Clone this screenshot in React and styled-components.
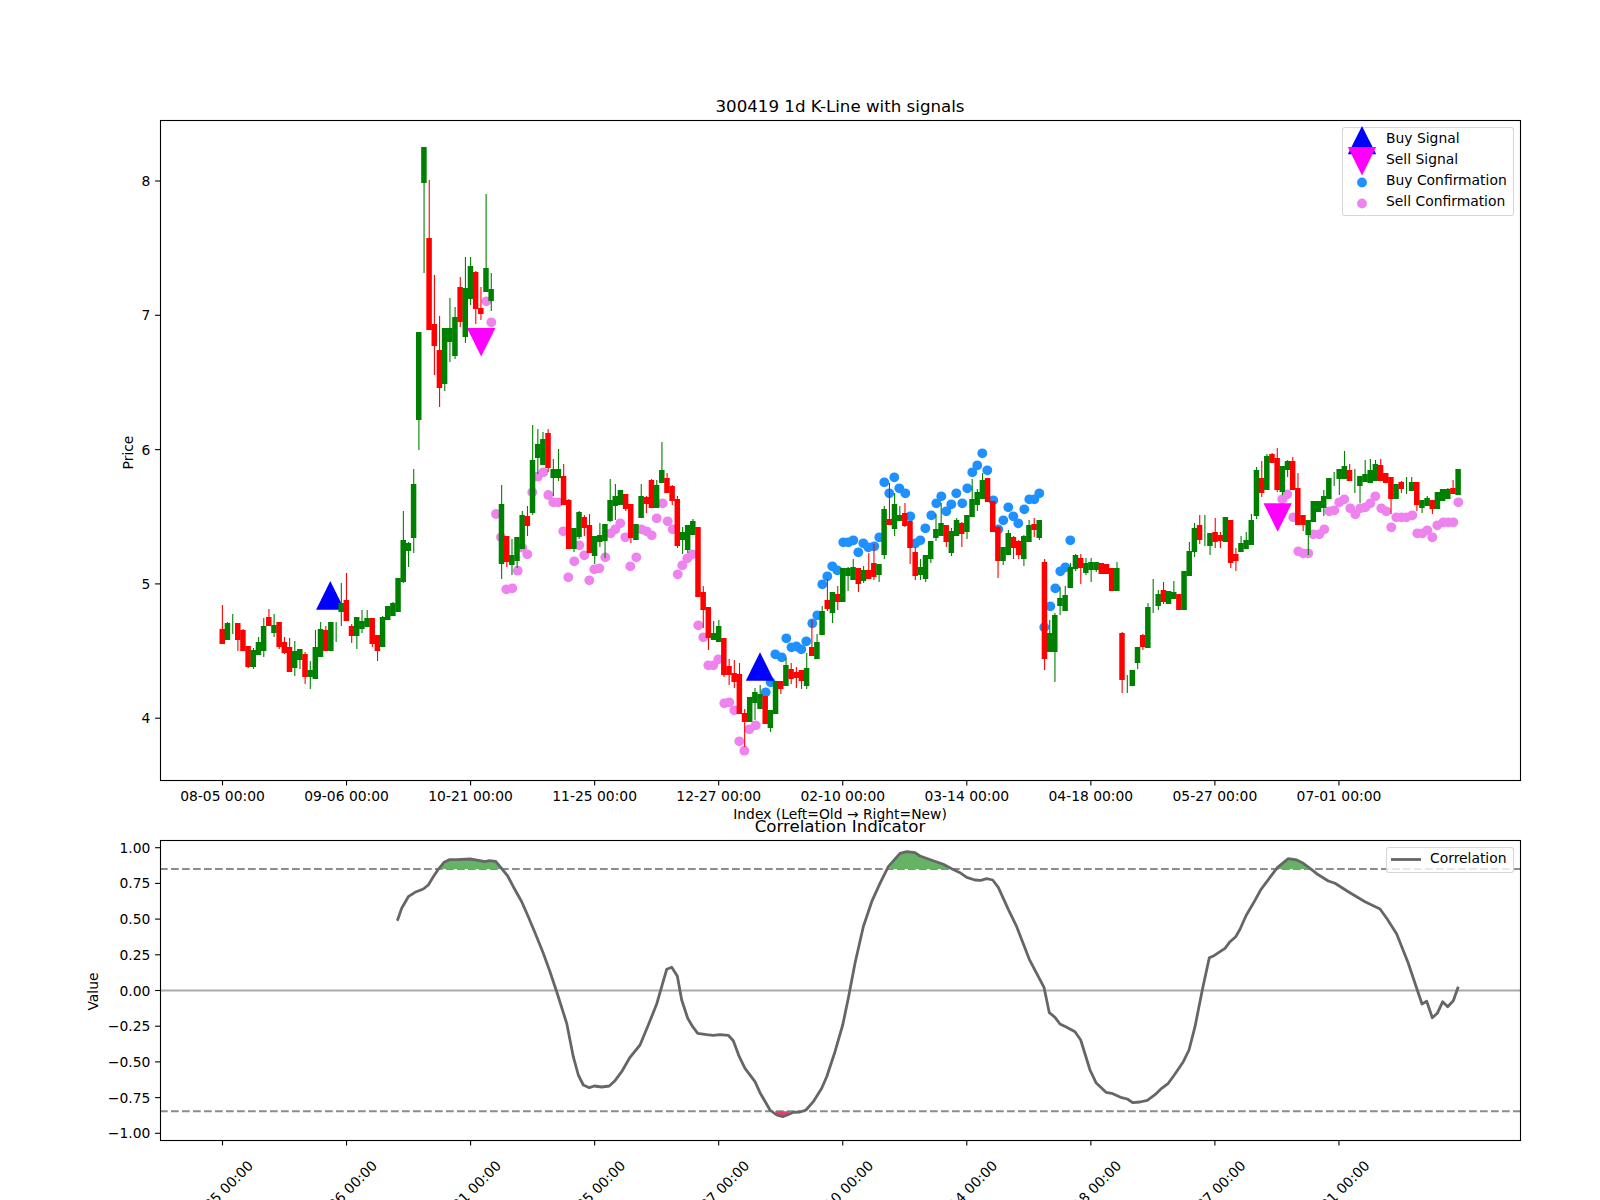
import React from "react";
import styled, { createGlobalStyle } from "styled-components";

const GlobalStyle = createGlobalStyle`
  html, body {
    margin: 0;
    padding: 0;
    background: #fff;
    overflow: hidden;
  }
`;

const Figure = styled.div`
  width: 1600px;
  height: 1200px;
  display: flex;
  flex-direction: column;
  overflow: hidden;
  background: #fff;
  font-family: "DejaVu Sans", sans-serif;
  color: #000;
`;

const Panel = styled.section`
  position: relative;
  flex: none;
  height: ${(p) => p.$height}px;
`;

const Plot = styled.svg`
  display: block;
  overflow: visible;
  font-family: "DejaVu Sans", sans-serif;
`;

const TickText = styled.text`
  font-size: 13.89px;
  fill: #000;
  text-anchor: ${(p) => p.$anchor || "middle"};
`;

const TitleText = styled.text`
  font-size: 16.67px;
  fill: #000;
  text-anchor: middle;
`;

const Spine = styled.rect`
  fill: none;
  stroke: #000;
  stroke-width: 1.1;
`;

const TickMark = styled.line`
  stroke: #000;
  stroke-width: 1.1;
`;

const Legend = styled.div`
  position: absolute;
  top: ${(p) => p.$top}px;
  right: 86px;
  width: ${(p) => p.$width}px;
  height: ${(p) => p.$height}px;
  box-sizing: border-box;
  background: rgba(255, 255, 255, 0.8);
  border: 1px solid rgba(204, 204, 204, 0.8);
  border-radius: 3px;
  font-size: 13.89px;
`;

const LegendRow = styled.div`
  display: flex;
  align-items: center;
  gap: 9px;
  height: 21px;
  padding-left: 4px;
  white-space: nowrap;
`;

const LegendKey = styled.svg`
  flex: none;
  width: 30px;
  height: 21px;
  overflow: visible;
`;

const LegendLabel = styled.span`
  padding-bottom: 2px;
`;

// main axes: x 160-1520, y 120-780
const X0 = 222.4;
const DX = 5.171;
const RED = "#ff0000";
const GREEN = "#008000";

// [colour, wick top, body top, body bottom, wick bottom] read off the plot, in px
const candles = [
  ["r",605,629,644,644],["g",622,623,640,640],["g",614,634,634,634],["r",623,623,640,651],["r",629,630,651,651],
  ["r",646,646,667,668],["g",648,650,667,669],["g",637,642,655,655],["g",618,626,651,657],["r",609,617,626,626],
  ["g",614,625,633,637],["r",622,622,647,649],["r",637,642,653,654],["r",638,647,672,672],["g",641,651,668,676],
  ["g",649,649,660,669],["r",652,654,677,684],["g",661,670,677,689],["g",630,647,679,679],["g",622,629,657,657],
  ["r",626,630,651,651],["g",622,622,651,651],["g",622,640,640,642],["g",583,603,612,626],["r",573,600,621,621],
  ["r",624,626,636,643],["g",617,617,636,649],["g",610,621,629,633],["g",610,618,627,627],["r",618,618,644,647],
  ["r",635,635,651,661],["g",616,617,647,647],["g",606,606,620,620],["g",602,603,616,616],["g",578,578,612,612],
  ["g",511,540,582,583],["g",542,543,551,567],["g",469,484,538,553],["g",332,332,420,450],["g",147,147,183,273],
  ["r",180,238,330,330],["r",275,324,346,375],["r",316,350,388,407],["g",328,328,384,391],["g",298,328,342,362],
  ["g",307,317,356,359],["r",277,287,322,327],["g",257,288,337,343],["g",257,266,299,305],["r",271,272,309,324],
  ["r",287,308,314,320],["g",194,268,292,292],["g",273,289,301,311],null,["g",485,504,564,579],
  ["r",536,536,562,567],["g",539,555,565,575],["g",537,537,561,568],["g",511,515,549,549],["r",506,516,526,536],
  ["g",425,460,513,515],["g",429,444,458,474],["g",432,439,465,465],["r",429,433,468,472],["g",459,469,478,496],
  ["g",449,469,478,481],["r",464,476,505,505],["r",499,500,549,549],["g",528,528,549,552],["g",511,512,537,539],
  ["r",515,517,528,536],["r",514,525,553,553],["g",536,536,556,564],["g",523,535,542,547],["g",524,524,541,558],
  ["g",479,500,521,522],["g",484,496,506,520],["g",490,490,505,505],["r",494,494,509,511],["r",504,504,538,543],
  ["g",524,524,540,540],["g",484,496,518,518],["r",496,497,504,513],["r",479,480,508,508],["g",480,485,508,508],
  ["g",442,470,483,483],["r",473,478,493,493],["r",485,486,501,505],["r",496,499,546,548],["g",527,532,540,554],
  ["g",525,525,550,553],["g",519,521,535,535],["r",527,527,597,597],["r",586,592,610,628],["r",607,607,638,650],
  ["g",621,633,640,640],["g",620,626,642,642],["r",638,638,675,677],["r",659,666,675,685],["r",660,673,682,688],
  ["r",663,674,714,714],["r",709,713,722,747],["g",697,697,722,722],["g",688,692,703,720],["g",685,694,709,709],
  ["r",696,696,724,724],["g",710,710,728,732],["g",681,681,714,714],["r",681,681,689,694],["g",658,665,686,686],
  ["r",663,669,679,684],["r",667,672,678,688],["r",670,670,681,689],["g",653,668,686,689],["r",620,647,656,656],
  ["g",634,642,659,659],["g",606,611,635,635],["r",579,600,609,611],["g",592,592,613,623],["r",586,594,602,610],
  ["g",568,568,602,602],["g",567,568,576,591],["g",559,567,580,580],["r",568,568,584,592],["g",566,570,581,583],
  ["r",553,570,579,579],["r",544,563,577,580],["g",564,564,575,582],["g",506,509,555,559],["r",483,519,525,525],
  ["g",493,504,529,536],["g",506,515,521,521],["r",503,513,526,527],["r",521,521,548,564],["r",547,552,576,580],
  ["g",559,567,575,580],["g",555,555,579,582],["g",541,541,559,563],["g",514,529,538,541],["g",503,523,536,536],
  ["r",525,525,542,547],["g",528,531,553,556],["g",518,520,536,536],["r",522,523,534,547],["g",515,515,532,539],
  ["g",479,499,517,517],["g",489,492,505,511],["g",473,480,499,499],["r",478,478,502,502],["r",501,501,532,532],
  ["r",526,527,561,578],["g",547,547,561,565],["g",530,533,555,555],["r",536,537,548,559],["r",540,541,555,559],
  ["g",535,536,559,566],["g",520,525,542,542],["r",518,524,530,537],["g",520,520,538,540],["r",559,562,659,670],
  ["g",620,633,652,652],["g",613,615,652,682],["g",587,598,606,615],["g",586,595,611,611],["g",563,567,588,588],
  ["g",554,555,569,571],["r",554,558,568,584],["g",558,563,573,575],["g",558,562,570,582],["g",562,562,570,572],
  ["r",563,563,574,574],["r",564,564,574,574],["r",568,568,591,591],["g",562,568,591,591],["r",632,633,680,693],
  ["g",675,684,684,693],["g",670,670,686,686],["g",647,647,663,669],["r",634,635,647,650],["g",603,607,648,648],
  ["g",579,600,600,613],["g",590,594,606,610],["r",582,590,602,604],["g",591,591,604,604],["g",581,592,599,599],
  ["r",594,594,610,610],["g",571,571,610,610],["g",542,551,576,576],["g",523,528,552,557],["r",515,525,540,544],
  ["g",515,530,530,546],["g",533,533,546,555],["r",518,532,542,548],["r",532,535,541,548],["g",517,517,542,542],
  ["r",520,520,563,568],["r",548,554,561,571],["g",536,543,552,552],["g",532,540,549,549],["g",514,520,545,545],
  ["g",467,470,516,519],["r",461,478,493,497],["g",454,456,490,490],["r",453,454,463,463],["r",448,458,490,492],
  ["g",466,466,492,495],["g",460,461,470,477],["r",457,461,490,490],["r",473,488,525,525],["r",515,515,525,531],
  ["g",520,520,535,555],["g",501,501,522,522],["g",501,501,512,512],["g",490,496,508,516],["g",478,478,499,499],
  ["g",472,480,480,486],["g",469,469,479,495],["g",451,466,479,479],["r",464,470,481,481],["g",469,480,480,493],
  ["g",476,476,486,503],["g",460,474,482,482],["g",459,470,483,483],["g",460,464,481,481],["r",459,465,481,481],
  ["r",473,473,483,483],["r",477,477,499,514],["g",484,484,499,499],["r",481,482,489,493],["g",477,485,485,494],
  ["g",477,482,491,491],["r",482,482,505,511],["g",500,500,508,513],["g",496,498,506,506],["r",500,500,509,514],
  ["g",492,492,509,509],["g",489,489,501,501],["g",488,489,499,499],["r",480,488,494,494],["g",469,469,495,495],
];

const sellDots = [
  [486.3,301.3],[491.3,322.3],[496,514],[501,537.3],[506.3,589.3],[512.3,588.3],[517.7,570.7],[522.3,547.7],
  [527.3,554.3],[532.3,492.3],[537.7,476.7],[543.3,472.3],[548.3,495],[553.3,502.3],[558.3,502.3],[563.3,531.3],
  [568.3,577.3],[574.3,561.3],[579.3,545.3],[584.3,555.3],[589.3,580.3],[594.3,569.3],[599.3,568.3],[605.3,557.3],
  [610.7,533.3],[615.3,529.3],[620.3,523.3],[625.3,537.3],[630.3,566.3],[636.3,557.3],[641.3,529.3],[646.7,531.3],
  [651.7,535.3],[656.7,518.3],[662.7,503.3],[667.7,521.3],[672.7,529.3],[677.7,574.3],[682.3,565.3],[687.3,558.3],
  [692.3,554.3],[698.3,625.3],[703.3,637.3],[708.3,665.3],[713.3,665.3],[718.3,659.3],[724.3,703.3],[729.3,702.3],
  [734.3,710.3],[739.3,741.3],[744.3,750.7],[749.3,729.3],[755.7,725.3],
  [1282.3,499.3],[1287.3,494.3],[1293.3,517.3],[1298.3,551.3],[1303.3,553.3],[1308.3,553.3],[1313.3,534.3],
  [1319.3,534.3],[1324.3,529.3],[1329.3,511.3],[1334.3,510.3],[1339.3,502.3],[1344.3,499.3],[1350.3,508.3],
  [1355.3,514.3],[1360.3,508.3],[1365.3,507.3],[1370.3,503.3],[1375.3,496.3],[1381.3,508.3],[1386.3,511.3],
  [1391.3,527.3],[1396.3,517.3],[1401.3,517.3],[1406.3,517.3],[1412.3,515.3],[1417.3,533.3],[1422.3,533.3],
  [1427.3,530.3],[1432.3,537.3],[1437.3,525.3],[1443.3,522.3],[1448.3,522.3],[1453.3,522.3],[1458.3,502.3],
];

const buyDots = [
  [765.7,692.3],[770.7,682.3],[775.3,654.3],[781.7,657.3],[786.3,638.3],[791.5,647.3],[796.5,646.5],[801.3,649.3],
  [806.3,641.3],[812.3,623.3],[817.3,615.3],[822.3,584.3],[827.3,576.3],[832.3,566.3],[837.3,570.3],[843.3,542.3],
  [848.3,542.3],[853.3,540.3],[858.3,552.3],[863.3,543.3],[868.3,547.3],[874.3,546.3],[879.3,537.3],[884.3,482.3],
  [889.3,493.3],[894.3,477.3],[899.3,488.3],[905.3,493.3],[910.3,516.3],[915.3,543.3],[920.3,540.3],[925.3,528.3],
  [931.3,515.3],[936.3,503.3],[941.3,496.3],[946.3,511.3],[951.3,504.3],[956.3,493.3],[962.3,503.3],[967.3,488.3],
  [972.3,472.3],[977.3,465.3],[982.3,453.3],[987.3,470.3],[993.3,500.3],[998.3,529.3],[1003.3,520.3],[1008.3,507.3],
  [1013.3,516.3],[1018.3,523.3],[1024.3,509.3],[1029.3,499.3],[1034.3,499.3],[1039.3,493.3],[1044.3,627.3],
  [1050.3,606.3],[1055.3,588.3],[1060.3,571.3],[1065.3,567.3],[1070.3,540.3],
];

const correlation = [
  [397.3,920.7],[401.7,908.3],[408.3,896.7],[415,892.3],[423.3,889],[428.3,885],[433.3,876.7],[438.3,869.3],
  [444,862.3],[449.3,859.7],[456.7,859.7],[470,859],[478.3,860.3],[485,861.7],[489.3,860.7],[495.7,861.3],
  [500.7,867.3],[507.7,876],[513.3,886.7],[521.7,901.7],[528.3,916.7],[535,932.7],[543.3,953.3],[550,971.7],
  [556.7,991.7],[566.7,1023.3],[573.3,1056.7],[578.3,1075],[583.3,1085],[589.3,1087.7],[594.3,1086],[601.7,1087],
  [609.3,1086],[615,1080.7],[621.7,1071.7],[630,1057.3],[640,1045],[648.3,1025],[656.7,1004],[661.7,986.7],
  [666.7,969.3],[671.7,967.3],[677.3,976],[681.7,1000],[687.7,1018.3],[692.7,1026.7],[697.7,1033.3],[706.7,1034.7],
  [713.3,1035.3],[720,1034.7],[728.3,1035.3],[733.3,1040.7],[739.3,1056.7],[745,1068.3],[755,1081.7],[760,1092.7],
  [770,1110],[776.7,1115],[782.7,1116.7],[786.7,1115.3],[793.3,1112.3],[800,1112],[806,1110],[813.3,1101.7],
  [821.7,1088.3],[826.7,1076.7],[835,1051.7],[842.7,1025],[848.3,998.3],[855,963.3],[863.3,926.7],[871.7,901.7],
  [880,883.3],[888.3,866.7],[900,853.3],[906.7,851.7],[915,852.7],[920,856],[933.3,860.7],[943.3,864.3],
  [951.7,868.7],[960,872.7],[966.7,877.3],[975,880],[980.7,880.3],[986.7,878.7],[992.7,880],[998.3,887.3],
  [1008.3,909.3],[1016.7,926.7],[1029.3,959.3],[1044,987.3],[1049.3,1012.7],[1055,1017.3],[1060,1024],
  [1066.7,1027.3],[1075,1031.7],[1080.7,1040],[1090,1070],[1096,1082.7],[1106,1092.3],[1111.7,1093.3],
  [1121.7,1097.7],[1127.3,1099],[1132.7,1102.7],[1140,1102],[1147.3,1100.3],[1155,1094.7],[1161.7,1088.3],
  [1168.3,1083.3],[1175,1074],[1183.3,1061.7],[1189,1050],[1195,1026.7],[1202.3,990],[1209.3,957.7],[1214,955.7],
  [1225,948.3],[1230,941.7],[1235.7,936.7],[1240,929.3],[1246,915.7],[1253.3,903.3],[1261,889.3],[1270,877.3],
  [1277.3,867.7],[1288.3,858.7],[1296.7,860],[1303.3,863.3],[1310,868.3],[1316.7,873.7],[1328.3,881],[1335,883.3],
  [1348.3,891.7],[1365,901.7],[1380,909],[1386.7,918.3],[1396.7,934],[1408.3,963.3],[1415,983.3],[1422,1004],
  [1426.7,1001.3],[1432.3,1017.7],[1437.3,1013.3],[1442.7,1001.7],[1447.7,1006.7],[1453.3,1000.7],[1458.3,986.7],
];

const UPPER = 869;
const LOWER = 1111.3;
const ZERO = 990.5;

const dates = ["08-05", "09-06", "10-21", "11-25", "12-27", "02-10", "03-14", "04-18", "05-27", "07-01"];
const tickX = dates.map((_, i) => 222.5 + 124.05 * i);
const priceTicks = [8, 7, 6, 5, 4].map((v, i) => ({ label: String(v), y: 181 + 134.3 * i }));
const valueTicks = ["1.00", "0.75", "0.50", "0.25", "0.00", "−0.25", "−0.50", "−0.75", "−1.00"].map((label, i) => ({
  label,
  y: 847.7 + 35.7 * i,
}));

const toPoints = (pts) => pts.map((p) => p.join(",")).join(" ");

// part of the line past a threshold, closed along the threshold
const band = (from, to, level) => {
  const inner = correlation.filter(([x]) => x > from && x < to);
  return toPoints([[from, level], ...inner, [to, level]]);
};

const triangleUp = (x, base) => `${x - 14.2},${base} ${x + 14.2},${base} ${x},${base - 28.6}`;
const triangleDown = (x, top) => `${x - 14.2},${top} ${x + 14.2},${top} ${x},${top + 28.6}`;

const Dots = ({ points, color }) => (
  <g fill={color}>
    {points.map(([x, y], i) => (
      <circle key={i} cx={x} cy={y} r={4.9} />
    ))}
  </g>
);

const Candles = () => (
  <g>
    {candles.map((c, i) => {
      if (!c) return null;
      const [kind, wickTop, top, bottom, wickBottom] = c;
      const color = kind === "r" ? RED : GREEN;
      const x = X0 + DX * i;
      return (
        <g key={i}>
          <line x1={x} x2={x} y1={wickTop} y2={wickBottom} stroke={color} strokeWidth={1.1} />
          {bottom > top && <rect x={x - 2.9} y={top} width={5.5} height={bottom - top} fill={color} />}
        </g>
      );
    })}
  </g>
);

const XTicks = ({ y }) =>
  tickX.map((x) => <TickMark key={x} x1={x} x2={x} y1={y} y2={y + 4.9} />);

const YAxis = ({ ticks }) =>
  ticks.map((t) => (
    <g key={t.label}>
      <TickMark x1={155.1} x2={160} y1={t.y} y2={t.y} />
      <TickText x={150.3} y={t.y + 5} $anchor="end">
        {t.label}
      </TickText>
    </g>
  ));

const KLineChart = () => (
  <Panel $height={800}>
    <Plot width={1600} height={800} viewBox="0 0 1600 800">
      <TitleText x={840} y={112}>300419 1d K-Line with signals</TitleText>
      <Dots points={sellDots} color="#ee82ee" />
      <Dots points={buyDots} color="#1e90ff" />
      <polygon points={triangleUp(330.3, 609.7)} fill="#0000ff" />
      <polygon points={triangleUp(760, 680.8)} fill="#0000ff" />
      <polygon points={triangleDown(481.2, 328)} fill="#ff00ff" />
      <polygon points={triangleDown(1277.7, 503.2)} fill="#ff00ff" />
      <Candles />
      <Spine x={160.5} y={120.5} width={1360} height={660} />
      <XTicks y={780.5} />
      {dates.map((d, i) => (
        <TickText key={d} x={tickX[i]} y={801}>{`${d} 00:00`}</TickText>
      ))}
      <TickText x={840} y={819}>Index (Left=Old → Right=New)</TickText>
      <YAxis ticks={priceTicks} />
      <TickText x={133} y={452.5} transform="rotate(-90 133 452.5)">Price</TickText>
    </Plot>
    <Legend $top={127} $width={172} $height={89}>
      <LegendRow>
        <LegendKey viewBox="0 0 30 21">
          <polygon points="0.8,26.3 29.2,26.3 15,-2" fill="#0000ff" />
        </LegendKey>
        <LegendLabel>Buy Signal</LegendLabel>
      </LegendRow>
      <LegendRow>
        <LegendKey viewBox="0 0 30 21">
          <polygon points="0.8,-2 29.2,-2 15,26.6" fill="#ff00ff" />
        </LegendKey>
        <LegendLabel>Sell Signal</LegendLabel>
      </LegendRow>
      <LegendRow>
        <LegendKey viewBox="0 0 30 21">
          <circle cx={15} cy={12.5} r={4.9} fill="#1e90ff" />
        </LegendKey>
        <LegendLabel>Buy Confirmation</LegendLabel>
      </LegendRow>
      <LegendRow>
        <LegendKey viewBox="0 0 30 21">
          <circle cx={15} cy={12.5} r={4.9} fill="#ee82ee" />
        </LegendKey>
        <LegendLabel>Sell Confirmation</LegendLabel>
      </LegendRow>
    </Legend>
  </Panel>
);

const CorrelationChart = () => (
  <Panel $height={400}>
    <Plot width={1600} height={400} viewBox="0 800 1600 400">
      <TitleText x={840} y={832}>Correlation Indicator</TitleText>
      <line x1={160} x2={1520} y1={ZERO} y2={ZERO} stroke="#aaaaaa" strokeWidth={2} />
      <line x1={160} x2={1520} y1={UPPER} y2={UPPER} stroke="#8c8c8c" strokeWidth={2} strokeDasharray="7.7 3.3" />
      <line x1={160} x2={1520} y1={LOWER} y2={LOWER} stroke="#8c8c8c" strokeWidth={2} strokeDasharray="7.7 3.3" />
      <polygon points={band(438, 502, UPPER)} fill="#66b366" />
      <polygon points={band(888.3, 951.7, UPPER)} fill="#66b366" />
      <polygon points={band(1276.7, 1309.3, UPPER)} fill="#66b366" />
      <polygon points={band(775, 790, LOWER)} fill="#e8406a" />
      <polyline points={toPoints(correlation)} fill="none" stroke="#666666" strokeWidth={2.8} strokeLinejoin="round" />
      <Spine x={160.5} y={840.5} width={1360} height={300} />
      <XTicks y={1140.5} />
      <YAxis ticks={valueTicks} />
      <TickText x={98} y={991.5} transform="rotate(-90 98 991.5)">Value</TickText>
      {dates.map((d, i) => {
        const cx = tickX[i] - 2;
        return (
          <TickText key={d} x={cx} y={1198} transform={`rotate(-45 ${cx} 1193)`}>{`${d} 00:00`}</TickText>
        );
      })}
    </Plot>
    <Legend $top={47} $width={128} $height={26}>
      <LegendRow>
        <LegendKey viewBox="0 0 30 21">
          <line x1={0} x2={30} y1={11.5} y2={11.5} stroke="#666666" strokeWidth={2.8} />
        </LegendKey>
        <LegendLabel>Correlation</LegendLabel>
      </LegendRow>
    </Legend>
  </Panel>
);

export default function App() {
  return (
    <Figure>
      <GlobalStyle />
      <KLineChart />
      <CorrelationChart />
    </Figure>
  );
}
